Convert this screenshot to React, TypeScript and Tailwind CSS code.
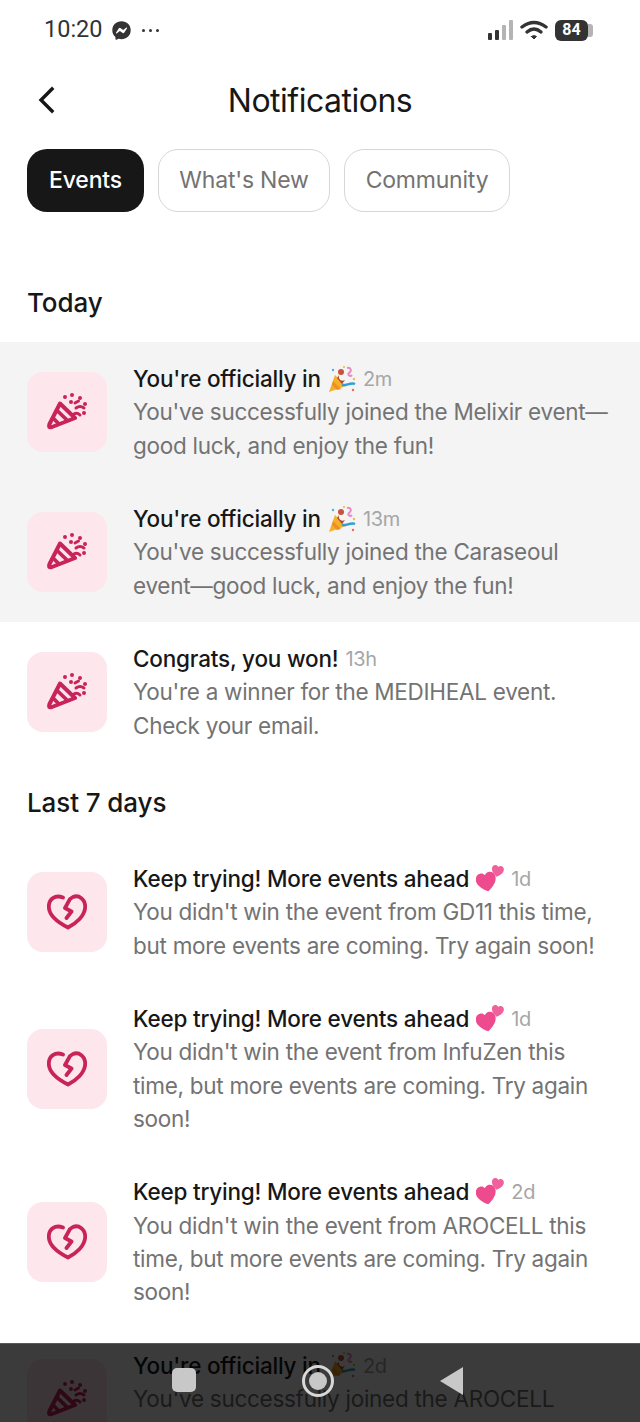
import { FaFacebookMessenger } from "react-icons/fa";

// party popper used in the event rows
function ConfettiIcon() {
  return (
    <svg width="40" height="40" viewBox="0 0 40 40" fill="none" className="text-[#c9235c]">
      <path d="M13 11.5 L28 26 L5 35 Q1 36.5 2.5 32 Z" stroke="currentColor" strokeWidth="4" strokeLinejoin="round" />
      <path d="M9.5 18 L21.5 29.5 M6 26 L12.5 32.5" stroke="currentColor" strokeWidth="3.8" />
      <g fill="currentColor">
        <circle cx="18" cy="5" r="2" />
        <circle cx="25" cy="3" r="2" />
        <circle cx="24" cy="10" r="2" />
        <circle cx="33" cy="6" r="2" />
        <circle cx="38" cy="12" r="2" />
        <circle cx="37" cy="21" r="2" />
      </g>
      <path d="M28 11 L31.5 9 M29 16 Q33 13 37 16 M27 22 Q30 20 33 23" stroke="currentColor" strokeWidth="3" strokeLinecap="round" />
    </svg>
  );
}

function BrokenHeartIcon() {
  return (
    <svg width="40" height="36" viewBox="0 0 40 36" fill="none" className="text-[#c9235c]">
      <path
        d="M16 3.5 C8 0.5 1.8 5 1.8 12.5 C1.8 22 13 29.5 21 33.5 C29 29.5 38.2 22 38.2 12.5 C38.2 5.5 32 0.5 26 3 L23 5 L18 14 L24.5 17.5 L19.5 24"
        stroke="currentColor"
        strokeWidth="3.8"
        strokeLinecap="round"
        strokeLinejoin="round"
      />
    </svg>
  );
}

function PartyEmoji() {
  return (
    <svg width="28" height="28" viewBox="0 0 28 28" className="shrink-0">
      <path d="M1 27 L7 10 L18 21 Z" fill="#f4b02a" />
      <path d="M5 16 L13 24 L9 25 L4 20 Z" fill="#ef8f22" />
      <circle cx="13" cy="7" r="3" fill="#c9513e" />
      <path d="M11 10 C10 14 13 17 17 15 L14 19 L9 13 Z" fill="#b5482f" />
      <path d="M19 3 C23 2 24 6 21 8 C19 10 22 12 24 10" stroke="#e58cc0" strokeWidth="2" fill="none" />
      <path d="M14 20 C18 21 23 17 27 19" stroke="#2c9fd8" strokeWidth="2.4" fill="none" />
      <circle cx="5" cy="5" r="1.2" fill="#4bb3e5" />
      <circle cx="16" cy="2" r="1.1" fill="#e8c13a" />
      <circle cx="26" cy="14" r="1.2" fill="#e8c13a" />
      <circle cx="25" cy="25" r="1.2" fill="#e66" />
    </svg>
  );
}

const heartPath = "M10 19 C4 15 0 11 0 6 C0 2.5 2.5 0 5.5 0 C7.5 0 9 1 10 2.5 C11 1 12.5 0 14.5 0 C17.5 0 20 2.5 20 6 C20 11 16 15 10 19 Z";

function HeartsEmoji() {
  return (
    <svg width="28" height="27" viewBox="0 0 28 27" className="shrink-0">
      <path d={heartPath} fill="#ee4a8e" transform="translate(0.5 7.5) rotate(-12 10 10)" />
      <path d={heartPath} fill="#f0609c" transform="translate(15.5 0.5) rotate(10 6 6) scale(0.6)" />
    </svg>
  );
}

type Row = {
  icon: "confetti" | "heart";
  title: string;
  emoji?: "party" | "hearts";
  time: string;
  lines: string[];
  unread?: boolean;
};

const today: Row[] = [
  {
    icon: "confetti",
    title: "You're officially in",
    emoji: "party",
    time: "2m",
    lines: ["You've successfully joined the Melixir event—", "good luck, and enjoy the fun!"],
    unread: true,
  },
  {
    icon: "confetti",
    title: "You're officially in",
    emoji: "party",
    time: "13m",
    lines: ["You've successfully joined the Caraseoul", "event—good luck, and enjoy the fun!"],
    unread: true,
  },
  {
    icon: "confetti",
    title: "Congrats, you won!",
    time: "13h",
    lines: ["You're a winner for the MEDIHEAL event.", "Check your email."],
  },
];

const lastWeek: Row[] = [
  {
    icon: "heart",
    title: "Keep trying! More events ahead",
    emoji: "hearts",
    time: "1d",
    lines: ["You didn't win the event from GD11 this time,", "but more events are coming. Try again soon!"],
  },
  {
    icon: "heart",
    title: "Keep trying! More events ahead",
    emoji: "hearts",
    time: "1d",
    lines: ["You didn't win the event from InfuZen this", "time, but more events are coming. Try again", "soon!"],
  },
  {
    icon: "heart",
    title: "Keep trying! More events ahead",
    emoji: "hearts",
    time: "2d",
    lines: ["You didn't win the event from AROCELL this", "time, but more events are coming. Try again", "soon!"],
  },
  {
    icon: "confetti",
    title: "You're officially in",
    emoji: "party",
    time: "2d",
    lines: ["You've successfully joined the AROCELL"],
  },
];

function NotificationRow({ row }: { row: Row }) {
  return (
    <div className={`flex min-h-[140px] gap-[26px] pl-[27px] pr-4 py-5 ${row.unread ? "bg-[#f4f4f4]" : "bg-white"}`}>
      <div className="self-center w-20 h-20 shrink-0 rounded-2xl bg-[#fde6ec] flex items-center justify-center">
        {row.icon === "confetti" ? <ConfettiIcon /> : <BrokenHeartIcon />}
      </div>
      <div className="min-w-0 text-[22.5px] leading-[33.33px] tracking-[-0.28px]">
        <div className="flex items-center h-[33.33px] whitespace-nowrap">
          <span className="font-medium tracking-[-0.2px] text-[#171717]">{row.title}</span>
          {row.emoji ? <span className="ml-[7px]">{row.emoji === "party" ? <PartyEmoji /> : <HeartsEmoji />}</span> : null}
          <span className="ml-[7px] pt-[2px] text-[20px] text-[#a6a6a6]">{row.time}</span>
        </div>
        {row.lines.map((line) => (
          <div key={line} className="text-[#737373] whitespace-nowrap">
            {line}
          </div>
        ))}
      </div>
    </div>
  );
}

function SectionTitle({ children }: { children: string }) {
  return <div className="h-20 px-[27px] flex items-center text-[26px] font-medium tracking-[-0.1px] text-[#171717]">{children}</div>;
}

export default function App() {
  return (
    <div className="relative w-[640px] h-[1422px] overflow-hidden bg-white font-['Inter',sans-serif]">
      {/* status bar */}
      <div className="h-[60px] flex items-center justify-between pl-[44px] pr-[47px] text-[#333333]">
        <div className="flex items-center gap-[9px]">
          <span className="font-['Roboto',sans-serif] text-[23.5px]">10:20</span>
          <FaFacebookMessenger size={19} />
          <span className="flex gap-[4px] ml-[2px]">
            <i className="w-[3px] h-[3px] rounded-full bg-[#333333]" />
            <i className="w-[3px] h-[3px] rounded-full bg-[#333333]" />
            <i className="w-[3px] h-[3px] rounded-full bg-[#333333]" />
          </span>
        </div>
        <div className="flex items-center gap-[7px]">
          <div className="flex items-end gap-[3px] h-[20px]">
            <i className="w-[4px] h-[7px] rounded-[1px] bg-[#333333]" />
            <i className="w-[4px] h-[10px] rounded-[1px] bg-[#333333]" />
            <i className="w-[4px] h-[15px] rounded-[1px] bg-[#b4b4b4]" />
            <i className="w-[4px] h-[20px] rounded-[1px] bg-[#b4b4b4]" />
          </div>
          <svg width="28" height="20" viewBox="0 0 28 20" fill="none" stroke="#333333" strokeWidth="3.4" strokeLinecap="round">
            <path d="M2 7 Q14 -2 26 7" />
            <path d="M7 12 Q14 6 21 12" />
            <path d="M11.5 16.5 L14 19 L16.5 16.5 Q14 14.5 11.5 16.5 Z" fill="#333333" strokeWidth="1" />
          </svg>
          <div className="flex items-center">
            <div className="w-[33px] h-[21px] rounded-[6px] bg-[#333333] text-white text-[16px] font-bold font-['Roboto',sans-serif] flex items-center justify-center">
              84
            </div>
            <i className="w-[5px] h-[13px] rounded-r-[3px] bg-[#b4b4b4]" />
          </div>
        </div>
      </div>

      {/* title bar */}
      <div className="relative h-[80px] flex items-center justify-center">
        <svg className="absolute left-[36px] top-[24px]" width="22" height="32" viewBox="0 0 22 32" fill="none" stroke="#171717" strokeWidth="3.4" strokeLinecap="square">
          <path d="M16 5 L5 16 L16 27" />
        </svg>
        <span className="pt-[1px] text-[32px] tracking-[-0.5px] text-[#171717]">Notifications</span>
      </div>

      {/* tabs */}
      <div className="mt-[9px] pl-[27px] flex gap-[14px] text-[23px] tracking-[-0.2px]">
        <div className="h-[63px] w-[117px] justify-center rounded-[20px] bg-[#171717] text-white font-medium flex items-center">Events</div>
        <div className="h-[63px] w-[172px] justify-center rounded-[20px] border-[1.5px] border-[#d6d6d6] text-[#737373] flex items-center">What's New</div>
        <div className="h-[63px] w-[166px] justify-center rounded-[20px] border-[1.5px] border-[#d6d6d6] text-[#737373] flex items-center">Community</div>
      </div>

      <div className="mt-[50px]">
        <SectionTitle>Today</SectionTitle>
        {today.map((row) => (
          <NotificationRow key={row.lines[0]} row={row} />
        ))}
        <SectionTitle>Last 7 days</SectionTitle>
        {lastWeek.map((row) => (
          <NotificationRow key={row.lines[0]} row={row} />
        ))}
      </div>

      {/* android nav bar, translucent over the list */}
      <div className="absolute left-0 right-0 bottom-0 h-[79px] bg-black/[0.77] border-t border-[#8a8a8a]/40">
        <div className="absolute left-[172px] top-[24px] w-[24px] h-[24px] rounded-[5px] bg-[#c8c8c8]" />
        <div className="absolute left-[302px] top-[21px] w-[32px] h-[32px] rounded-full border-[3px] border-[#d8d8d8] flex items-center justify-center">
          <div className="w-[18px] h-[18px] rounded-full bg-[#c8c8c8]" />
        </div>
        <svg className="absolute left-[439px] top-[22px]" width="25" height="30" viewBox="0 0 25 30">
          <path d="M24 1 V29 L1 15 Z" fill="#c8c8c8" />
        </svg>
      </div>
    </div>
  );
}
